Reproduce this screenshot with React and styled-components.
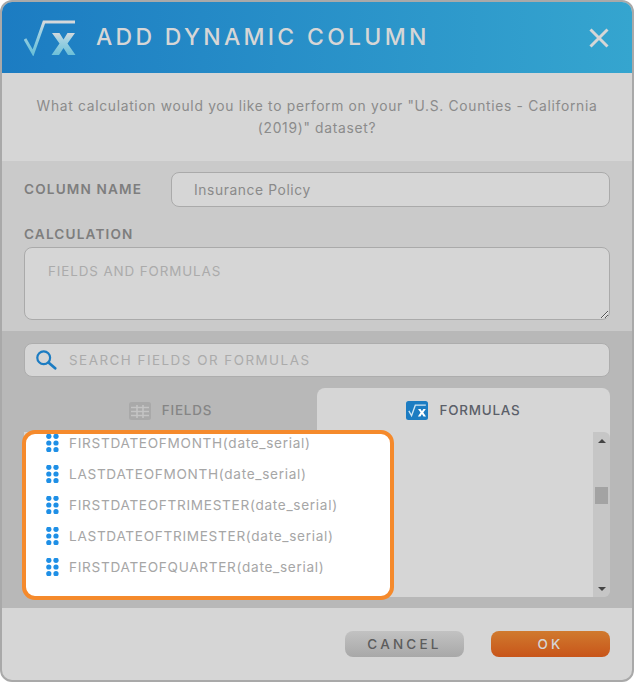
import styled, { createGlobalStyle } from "styled-components";

const Global = createGlobalStyle`
  html, body {
    margin: 0;
    padding: 0;
    background: #fff;
  }
  * {
    box-sizing: border-box;
  }
`;

const font = `Inter, "Open Sans", sans-serif`;

const Dialog = styled.div`
  width: 634px;
  height: 682px;
  border: 2px solid #a9a9a9;
  border-radius: 12px;
  overflow: hidden;
  display: flex;
  flex-direction: column;
  background: #d6d6d6;
  font-family: ${font};
`;
const Header = styled.header`
  height: 71px;
  flex: none;
  display: flex;
  align-items: center;
  padding: 0 23px 0 22px;
  background: linear-gradient(90deg, #1c7cc2, #35a5cf);
`;
const Title = styled.h1`
  flex: 1;
  margin: 0 0 2px 20px;
  font-size: 23px;
  font-weight: 500;
  letter-spacing: 3.3px;
  color: #d6d6d6;
  white-space: nowrap;
`;
const Intro = styled.p`
  height: 88px;
  flex: none;
  margin: 0;
  padding: 22px 30px 0;
  font-size: 13.8px;
  letter-spacing: 0.7px;
  line-height: 22px;
  text-align: center;
  color: #8b8b8b;
`;
const FormSection = styled.section`
  height: 170px;
  flex: none;
  padding: 11px 22px 0;
  background: #cacaca;
`;
const NameRow = styled.div`
  display: flex;
  align-items: center;
  gap: 28px;
`;
const Label = styled.label`
  display: block;
  width: ${(p) => p.$width || "auto"};
  margin-bottom: 2px;
  font-size: 13.6px;
  font-weight: 600;
  letter-spacing: 1.16px;
  color: #7e7e7e;
  white-space: nowrap;
`;
const CalcLabel = styled(Label)`
  margin: 19px 0 5px;
`;
const TextInput = styled.input`
  flex: 1;
  height: 35px;
  min-width: 0;
  padding: 0 22px;
  border: 1px solid #aaa;
  border-radius: 8px;
  outline: none;
  background: #d6d6d6;
  font: 400 13.8px ${font};
  letter-spacing: 0.6px;
  color: #8a8a8a;
`;
const CalcInput = styled.textarea`
  display: block;
  width: 586px;
  height: 73px;
  padding: 15px 23px;
  border: 1px solid #aaa;
  border-radius: 8px;
  outline: none;
  resize: vertical;
  background: #d6d6d6;
  font: 400 13.4px ${font};
  letter-spacing: 0.9px;
  &::placeholder {
    color: #ababab;
    opacity: 1;
  }
`;
const PickerSection = styled.section`
  height: 277px;
  flex: none;
  padding: 12px 22px 0;
  background: #b8b8b8;
`;
const SearchBox = styled.div`
  height: 34px;
  display: flex;
  align-items: center;
  gap: 12px;
  padding: 0 10px;
  border: 1px solid #adadad;
  border-radius: 8px;
  background: #d6d6d6;
`;
const SearchInput = styled.input`
  flex: 1;
  min-width: 0;
  border: 0;
  padding: 0;
  outline: none;
  background: transparent;
  font: 400 13.4px ${font};
  letter-spacing: 1.5px;
  &::placeholder {
    color: #ababab;
    opacity: 1;
  }
`;
const Tabs = styled.div`
  display: grid;
  grid-template-columns: 293px 293px;
  height: 44px;
  margin-top: 11px;
`;
const Tab = styled.div`
  display: flex;
  align-items: center;
  justify-content: center;
  gap: 11px;
  padding-top: 1px;
  border-radius: 8px 8px 0 0;
  background: ${(p) => (p.$active ? "#d6d6d6" : "transparent")};
  color: ${(p) => (p.$active ? "#5b5f69" : "#858585")};
  font-size: 13.4px;
  font-weight: 500;
  letter-spacing: 0.8px;
`;
const TabLabel = styled.span`
  margin-bottom: 2px;
`;
const ListPanel = styled.div`
  height: 165px;
  display: flex;
  justify-content: space-between;
  border-radius: 0 0 8px 8px;
  background: #d6d6d6;
`;
const Highlight = styled.ul`
  width: 372px;
  height: 170px;
  flex: none;
  margin: -2px 0 0 -2px;
  padding: 0;
  list-style: none;
  overflow: hidden;
  position: relative;
  border: 4.5px solid #f58a2c;
  border-radius: 13px;
  background: #fff;
`;
const Row = styled.li`
  height: 31px;
  display: flex;
  align-items: center;
  gap: 10px;
  padding-left: 20px;
  transform: translateY(-7px);
  font-size: 13.6px;
  letter-spacing: 0.7px;
  color: #a6a6a6;
  white-space: nowrap;
`;
const Scrollbar = styled.div`
  width: 17px;
  display: flex;
  flex-direction: column;
  align-items: center;
  padding: 7px 0 6px;
  border-radius: 0 6px 6px 0;
  background: #c6c6c6;
`;
const Arrow = styled.div`
  width: 0;
  height: 0;
  border-left: 4px solid transparent;
  border-right: 4px solid transparent;
  border-${(p) => (p.$up ? "bottom" : "top")}: 4px solid #444;
  margin-top: ${(p) => (p.$up ? "0" : "auto")};
`;
const Thumb = styled.div`
  width: 13px;
  height: 17px;
  margin-top: 44px;
  background: #a3a3a3;
`;
const Footer = styled.footer`
  flex: 1;
  display: flex;
  justify-content: flex-end;
  gap: 27px;
  padding: 23px 22px 0;
`;
const Button = styled.button`
  width: 119px;
  height: 26px;
  border: 0;
  border-radius: 8px;
  background: ${(p) =>
    p.$primary
      ? "linear-gradient(180deg, #d07a2e, #c8551a)"
      : "linear-gradient(180deg, #c2c2c2, #a8a8a8)"};
  color: ${(p) => (p.$primary ? "#d6d6d6" : "#5c5c5c")};
  font: 500 13.5px ${font};
  letter-spacing: 3.2px;
`;
const Icon = styled.svg`
  flex: none;
`;

const SURD = "M1 19 L9 33 L20 2 H51";
const EX = "M28 13 H35.5 L39.5 19.5 L43.5 13 H51 L43.5 23.5 L51.5 35 H44 L39.5 28 L35 35 H27.5 L35.5 23.5 Z";

const Grip = () => (
  <Icon width="13" height="18" viewBox="0 0 13 18">
    {[2.3, 9, 15.7].map((y) =>
      [2.8, 10].map((x) => <circle key={`${x}-${y}`} cx={x} cy={y} r="2.6" fill="#1e8fe6" />)
    )}
  </Icon>
);

const formulas = [
  "FIRSTDATEOFMONTH(date_serial)",
  "LASTDATEOFMONTH(date_serial)",
  "FIRSTDATEOFTRIMESTER(date_serial)",
  "LASTDATEOFTRIMESTER(date_serial)",
  "FIRSTDATEOFQUARTER(date_serial)",
];

const App = () => {
  return (
    <>
      <Global />
      <Dialog>
        <Header>
          <Icon width="52" height="36" viewBox="0 0 52 36">
            <defs>
              <linearGradient id="headMark" x1="0" y1="0" x2="0" y2="1">
                <stop offset="0" stopColor="#d6d8da" />
                <stop offset="0.3" stopColor="#a4d2e2" />
                <stop offset="1" stopColor="#6cc0d8" />
              </linearGradient>
            </defs>
            <path d={SURD} fill="none" stroke="url(#headMark)" strokeWidth="3" />
            <path d={EX} fill="url(#headMark)" />
          </Icon>
          <Title>ADD DYNAMIC COLUMN</Title>
          <Icon width="20" height="20" viewBox="0 0 20 20">
            <path d="M1.5 1.5 L18.5 18.5 M18.5 1.5 L1.5 18.5" stroke="#d6d6d6" strokeWidth="3" />
          </Icon>
        </Header>
        <Intro>
          What calculation would you like to perform on your "U.S. Counties - California (2019)"
          dataset?
        </Intro>
        <FormSection>
          <NameRow>
            <Label $width="119px">COLUMN NAME</Label>
            <TextInput defaultValue="Insurance Policy" />
          </NameRow>
          <CalcLabel>CALCULATION</CalcLabel>
          <CalcInput placeholder="FIELDS AND FORMULAS" />
        </FormSection>
        <PickerSection>
          <SearchBox>
            <Icon width="22" height="22" viewBox="0 0 24 24">
              <circle cx="9.5" cy="9.5" r="7" fill="none" stroke="#1c7cc2" strokeWidth="2.4" />
              <path d="M15 15 L22 21" stroke="#1c7cc2" strokeWidth="3" strokeLinecap="round" />
            </Icon>
            <SearchInput placeholder="SEARCH FIELDS OR FORMULAS" />
          </SearchBox>
          <Tabs>
            <Tab>
              <Icon width="22" height="18" viewBox="0 0 22 18">
                <rect width="22" height="18" rx="2.5" fill="#a9a9a9" />
                <path
                  d="M2 5.5 H20 M2 9.5 H20 M2 13.5 H20 M8 3 V16 M14 3 V16"
                  stroke="#c4c4c4"
                  strokeWidth="1.6"
                />
              </Icon>
              <TabLabel>FIELDS</TabLabel>
            </Tab>
            <Tab $active>
              <Icon width="22" height="19" viewBox="0 0 22 19">
                <rect width="22" height="19" rx="2.5" fill="#1c7cc2" />
                <g transform="translate(2.5 3.5) scale(0.34)">
                  <path d={SURD} fill="none" stroke="#cfe6f3" strokeWidth="4" />
                  <path d={EX} fill="#fff" />
                </g>
              </Icon>
              <TabLabel>FORMULAS</TabLabel>
            </Tab>
          </Tabs>
          <ListPanel>
            <Highlight>
              {formulas.map((name) => (
                <Row key={name}>
                  <Grip />
                  {name}
                </Row>
              ))}
            </Highlight>
            <Scrollbar>
              <Arrow $up />
              <Thumb />
              <Arrow />
            </Scrollbar>
          </ListPanel>
        </PickerSection>
        <Footer>
          <Button>CANCEL</Button>
          <Button $primary>OK</Button>
        </Footer>
      </Dialog>
    </>
  );
};

export default App;
